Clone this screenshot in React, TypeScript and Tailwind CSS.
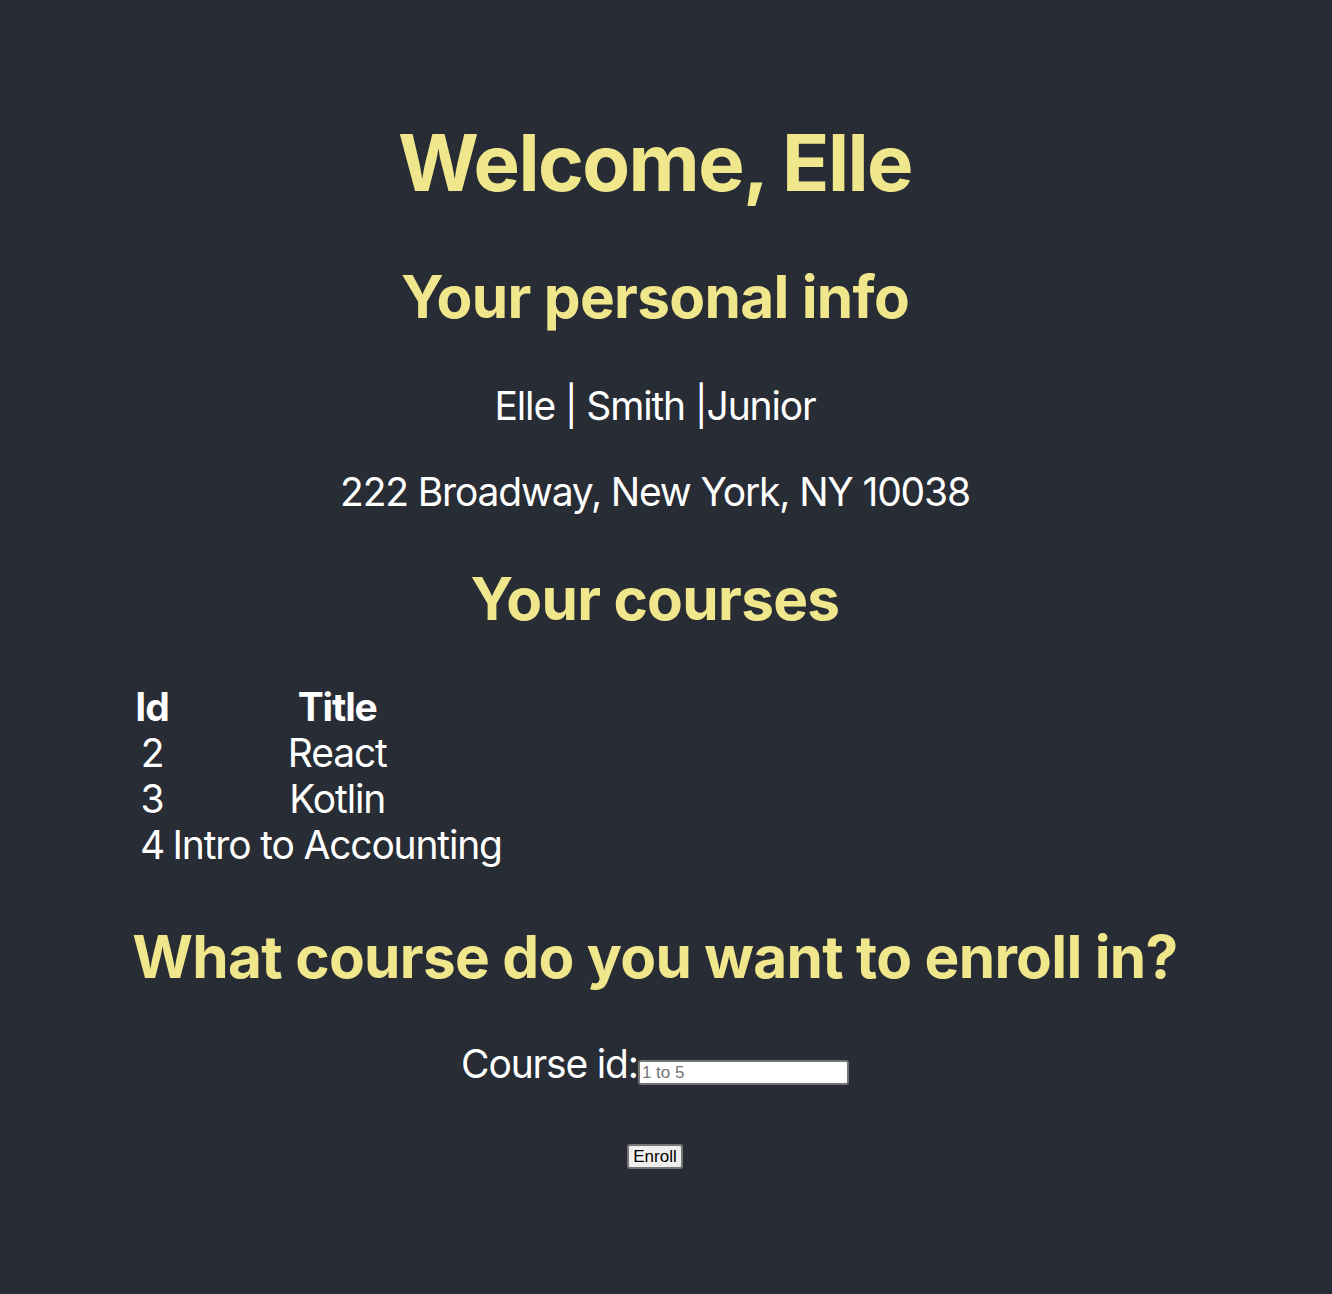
const courses = [
  { id: 2, title: 'React' },
  { id: 3, title: 'Kotlin' },
  { id: 4, title: 'Intro to Accounting' },
];

export default function App() {
  return (
    <div className="min-h-screen bg-[#282c34] text-white font-['Inter',sans-serif] text-[39px] tracking-[-0.03em] flex flex-col items-center pt-[64px] pb-[60px] pr-[22px]">
      <div className="w-fit text-center">
        <h1 className="text-[78px] font-bold text-[#f0e68c] my-[52px] leading-[1.21] tracking-[-0.02em]">Welcome, Elle</h1>
        <h2 className="text-[58.5px] font-bold text-[#f0e68c] my-[48.5px] leading-[1.21] tracking-[-0.012em]">Your personal info</h2>
        <p className="my-[39px] leading-[1.21]">Elle | Smith |Junior</p>
        <p className="my-[39px] leading-[1.21]">222 Broadway, New York, NY 10038</p>
        <h2 className="text-[58.5px] font-bold text-[#f0e68c] my-[48.5px] leading-[1.21] tracking-[-0.012em]">Your courses</h2>
        <table className="border-separate border-spacing-[2px] leading-[42px]">
          <thead>
            <tr>
              <th className="p-px font-bold">Id</th>
              <th className="p-px font-bold">Title</th>
            </tr>
          </thead>
          <tbody>
            {courses.map((c) => (
              <tr key={c.id}>
                <td className="p-px text-center">{c.id}</td>
                <td className="p-px text-center">{c.title}</td>
              </tr>
            ))}
          </tbody>
        </table>
        <h2 className="text-[58.5px] font-bold text-[#f0e68c] mt-[53px] mb-[42px] leading-[1.21] tracking-[-0.012em]">
          What course do you want to enroll in?
        </h2>
        <form onSubmit={(e) => e.preventDefault()}>
          <label className="leading-[1.21]">
            Course id:
            <input
              type="text"
              placeholder="1 to 5"
              className="w-[211px] h-[25px] bg-white text-black text-[17px] tracking-normal font-['Liberation_Sans',Arial,sans-serif] border-2 border-[#767676] rounded-[3px] px-[2px] py-px placeholder:text-[#757575] align-baseline"
            />
          </label>
          <div className="mt-[35px] leading-none">
            <button
              type="submit"
              className="text-black text-[17px] tracking-normal font-['Liberation_Sans',Arial,sans-serif] bg-[#efefef] border-2 border-[#767676] rounded-[3px] px-[4px] h-[25px]"
            >
              Enroll
            </button>
          </div>
        </form>
      </div>
    </div>
  );
}
